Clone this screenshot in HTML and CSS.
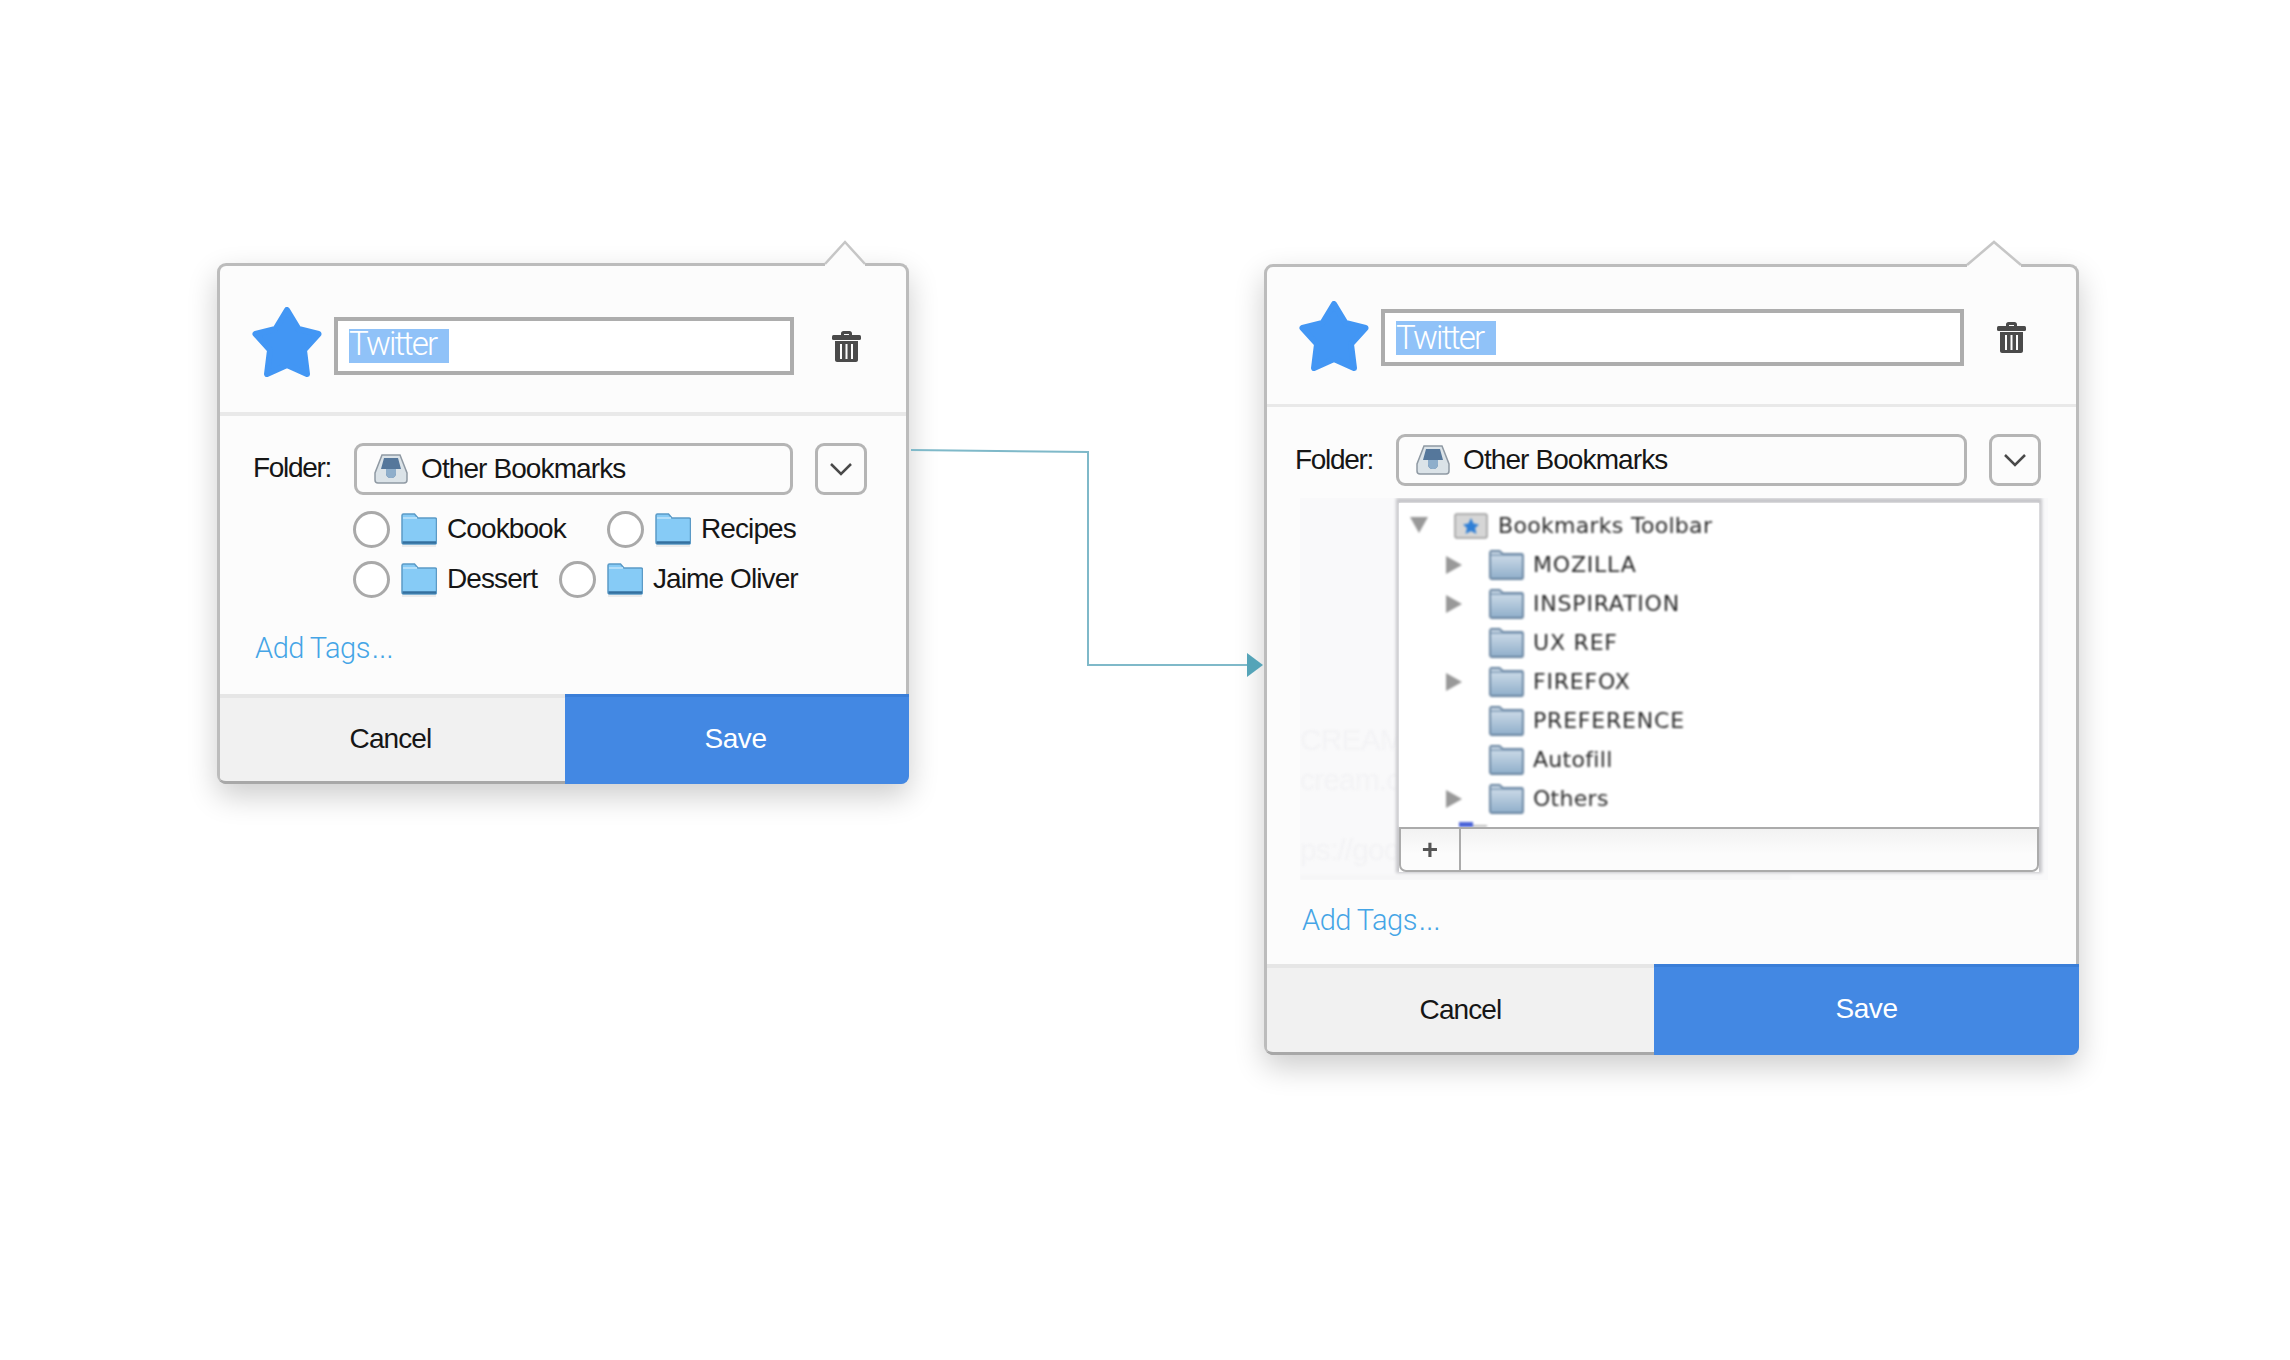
FILE: index.html
```html
<!DOCTYPE html>
<html lang="en">
<head>
    <meta charset="UTF-8">
    <meta name="viewport" content="width=device-width, initial-scale=1.0">
    <title>Bookmark Popup Flow</title>
    <link rel="stylesheet" href="styles.css">
</head>
<body>

<svg class="defs" width="0" height="0">
    <symbol id="star" viewBox="0 0 70 70">
        <polygon points="35,3 46.500,22 66.500,27 52,43 55,67 35,58 15,67 18,43 3.500,27 23.500,22" fill="#4296f4" stroke="#4296f4" stroke-width="6" stroke-linejoin="round"/>
    </symbol>
    <symbol id="trash" viewBox="0 0 29 31">
        <path d="M9 5V2.500C9 1 10 0 11.500 0h6C19 0 20 1 20 2.500V5h-3V3h-5v2z" fill="#4a4a4a"/>
        <rect x="0" y="4" width="29" height="5" rx="1.500" fill="#4a4a4a"/>
        <path d="M3 10h23v19c0 1-1 2-2 2H5c-1 0-2-1-2-2z" fill="#4a4a4a"/>
        <path d="M9 13v15M14.500 13v15M20 13v15" stroke="#fcfcfc" stroke-width="2"/>
    </symbol>
    <symbol id="tray" viewBox="0 0 34 30">
        <path d="M8 1h18l7 18v7c0 2-1 3-3 3H4c-2 0-3-1-3-3v-7z" fill="#dbe3e8" stroke="#8f99a3" stroke-width="1.500"/>
        <path d="M10 4h14l3 11h-5v4c0 3-2 5-5 5s-5-2-5-5v-4H7z" fill="#55779b"/>
        <path d="M12 15h10v4c0 3-2 5-5 5s-5-2-5-5z" fill="#8eaecb"/>
    </symbol>
    <symbol id="folder-blue" viewBox="0 0 36 34">
        <rect x="1" y="31" width="34" height="3" fill="#ececec"/>
        <path d="M1 29V2.500C1 1.500 1.500 1 2.500 1h11L17 5h17c1 0 1.500.5 1.500 1.500V29c0 1-.5 2-1.500 2H2.500C1.500 31 1 30 1 29z" fill="#86cbf6" stroke="#5b9ac6" stroke-width="1.500"/>
        <path d="M2 5h14" stroke="#b3def9" stroke-width="2"/>
        <path d="M1.500 29.500h33.500" stroke="#35709f" stroke-width="2.500"/>
    </symbol>
    <symbol id="folder-gray" viewBox="0 0 35 30">
        <linearGradient id="folderFill" x1="0" y1="0" x2="0" y2="1">
            <stop offset="0" stop-color="#d5e1ec"/>
            <stop offset="1" stop-color="#8faeca"/>
        </linearGradient>
        <path d="M1 27V3c0-1 .5-2 1.500-2h8L14 4h18.500c1 0 1.500 1 1.500 2v21c0 1-.5 2-1.500 2h-30C1.500 29 1 28 1 27z" fill="url(#folderFill)" stroke="#67839f" stroke-width="1.800"/>
        <path d="M2 5h31" stroke="#7c98b4" stroke-width="1.500"/>
    </symbol>
    <symbol id="toolbar" viewBox="0 0 34 26">
        <rect x="1" y="1" width="32" height="24" rx="2" fill="#d6d6d6" stroke="#9a9a9a" stroke-width="1.500"/>
        <polygon points="17,5 19.500,10.500 25,11.500 21,15 22.500,21 17,18 11.500,21 13,15 9,11.500 14.500,10.500" fill="#2f7fd6"/>
    </symbol>
</svg>

<svg class="connector" width="2290" height="1360">
    <path d="M911 450L1088 452V665H1250" fill="none" stroke="#7fb9c9" stroke-width="2"/>
    <polygon points="1247,653 1263,665 1247,677" fill="#55a4b8"/>
</svg>

<div class="page">

    <div class="popup popup-a">
        <svg class="beak" width="44" height="28">
            <polygon points="2,24 22,2 42,24 42,28 2,28" fill="#fcfcfc"/>
            <polyline points="2,24 22,2 42,24" fill="none" stroke="#c6c6c6" stroke-width="2.500"/>
        </svg>
        <div class="head">
            <svg class="star"><use href="#star"/></svg>
            <div class="title-input"><span class="title-sel">Twitter</span></div>
            <svg class="trash"><use href="#trash"/></svg>
        </div>
        <div class="folder-row">
            <span class="folder-label">Folder:</span>
            <div class="folder-select">
                <svg class="tray"><use href="#tray"/></svg>
                <span>Other Bookmarks</span>
            </div>
            <div class="chevron-btn">
                <svg width="24" height="14" viewBox="0 0 24 14"><path d="M2 2l10 10L22 2" fill="none" stroke="#4a4a4a" stroke-width="2.500"/></svg>
            </div>
        </div>
        <div class="options">
            <div class="option-row row-one">
                <div class="option"><span class="radio"></span><svg class="mini-folder"><use href="#folder-blue"/></svg><span>Cookbook</span></div>
                <div class="option"><span class="radio"></span><svg class="mini-folder"><use href="#folder-blue"/></svg><span>Recipes</span></div>
            </div>
            <div class="option-row row-two">
                <div class="option"><span class="radio"></span><svg class="mini-folder"><use href="#folder-blue"/></svg><span>Dessert</span></div>
                <div class="option"><span class="radio"></span><svg class="mini-folder"><use href="#folder-blue"/></svg><span>Jaime Oliver</span></div>
            </div>
        </div>
        <a class="add-tags">Add Tags<span class="dots">…</span></a>
        <div class="actions">
            <div class="btn-cancel">Cancel</div>
            <div class="btn-save">Save</div>
        </div>
    </div>

    <div class="popup popup-b">
        <svg class="beak" width="58" height="29">
            <polygon points="2,25 29,2 56,25 56,29 2,29" fill="#fcfcfc"/>
            <polyline points="2,25 29,2 56,25" fill="none" stroke="#c6c6c6" stroke-width="2.500"/>
        </svg>
        <div class="head">
            <svg class="star"><use href="#star"/></svg>
            <div class="title-input"><span class="title-sel">Twitter</span></div>
            <svg class="trash"><use href="#trash"/></svg>
        </div>
        <div class="folder-row">
            <span class="folder-label">Folder:</span>
            <div class="folder-select">
                <svg class="tray"><use href="#tray"/></svg>
                <span>Other Bookmarks</span>
            </div>
            <div class="chevron-btn">
                <svg width="24" height="14" viewBox="0 0 24 14"><path d="M2 2l10 10L22 2" fill="none" stroke="#4a4a4a" stroke-width="2.500"/></svg>
            </div>
        </div>

        <div class="tree-backdrop">
            <div class="ghost">
                <span class="ghost-a">CREAM</span>
                <span class="ghost-b">cream.co</span>
                <span class="ghost-c">ps://goo</span>
                <div class="ghost-strip"></div>
            </div>
            <div class="tree">
                <div class="tree-list">
                    <div class="tree-row root"><span class="twisty open"></span><svg class="toolbar-icon"><use href="#toolbar"/></svg><span>Bookmarks Toolbar</span></div>
                    <div class="tree-row caps"><span class="twisty shut"></span><svg class="tree-folder"><use href="#folder-gray"/></svg><span>MOZILLA</span></div>
                    <div class="tree-row caps"><span class="twisty shut"></span><svg class="tree-folder"><use href="#folder-gray"/></svg><span>INSPIRATION</span></div>
                    <div class="tree-row caps"><span class="twisty"></span><svg class="tree-folder"><use href="#folder-gray"/></svg><span>UX REF</span></div>
                    <div class="tree-row caps"><span class="twisty shut"></span><svg class="tree-folder"><use href="#folder-gray"/></svg><span>FIREFOX</span></div>
                    <div class="tree-row caps"><span class="twisty"></span><svg class="tree-folder"><use href="#folder-gray"/></svg><span>PREFERENCE</span></div>
                    <div class="tree-row"><span class="twisty"></span><svg class="tree-folder"><use href="#folder-gray"/></svg><span>Autofill</span></div>
                    <div class="tree-row"><span class="twisty shut"></span><svg class="tree-folder"><use href="#folder-gray"/></svg><span>Others</span></div>
                    <div class="cut-off"><i></i><b></b></div>
                </div>
                <div class="tree-bar">
                    <div class="tree-add">+</div>
                </div>
            </div>
        </div>

        <a class="add-tags">Add Tags<span class="dots">…</span></a>
        <div class="actions">
            <div class="btn-cancel">Cancel</div>
            <div class="btn-save">Save</div>
        </div>
    </div>

</div>

</body>
</html>
```

FILE: styles.css
```css
* { margin: 0; padding: 0; box-sizing: border-box; }

body { background-color: #fff; font-family: "Liberation Sans", Arial, sans-serif; color: #161616; font-size: 28px; letter-spacing: -0.9px; overflow: hidden; }

.defs { position: absolute; }

/* line between the two popups, on top of everything */
.connector { position: absolute; top: 0; left: 0; z-index: 5; }

.page { width: 2290px; height: 1360px; display: flex; align-items: flex-start; padding: 263px 0 0 217px; gap: 355px; }

.popup { position: relative; background-color: #fcfcfc; border: 3px solid #bcbcbc; border-bottom-color: #a8a8a8; border-radius: 9px; box-shadow: 0 12px 30px rgba(0, 0, 0, 0.2); }
.popup-a { width: 692px; }
.popup-b { width: 815px; margin-top: 1px; }

.beak { position: absolute; display: block; }
.popup-a .beak { top: -26px; left: 603px; }
.popup-b .beak { top: -27px; left: 698px; }

/* top row */
.head { display: flex; align-items: flex-start; border-bottom: 4px solid #e9e9e9; padding-left: 32px; }
.popup-a .head { height: 150px; padding-top: 41px; }
.popup-b .head { height: 140px; padding-top: 34px; border-bottom-width: 3px; }

.star { width: 70px; height: 70px; flex: none; }
.trash { width: 29px; height: 31px; flex: none; }
.popup-a .trash { margin: 24px 0 0 38px; }
.popup-b .trash { margin: 21px 0 0 33px; }

.title-input { background-color: #fff; border: 4px solid #adadad; margin-left: 12px; display: flex; align-items: center; flex: none; }
.popup-a .title-input { width: 460px; height: 58px; margin-top: 10px; padding-left: 11px; }
.popup-b .title-input { width: 583px; height: 57px; margin-top: 8px; padding-left: 11px; }

.title-sel { display: block; width: 100px; height: 34px; background-color: #90c2f8; color: #fff; font-family: Roboto, "Liberation Sans", sans-serif; font-weight: 300; font-size: 33px; letter-spacing: -1.9px; }
.popup-a .title-sel { line-height: 30px; }
.popup-b .title-sel { line-height: 33px; }

/* folder row */
.folder-row { display: flex; align-items: center; padding-top: 27px; gap: 22px; }
.popup-a .folder-row { padding-left: 33px; }
.popup-b .folder-row { padding-left: 28px; }

.folder-label { width: 79px; flex: none; letter-spacing: -1.3px; }
.popup-a .folder-label { line-height: 30px; padding-bottom: 2px; }

.folder-select { height: 52px; border: 3px solid #b5b5b5; border-radius: 9px; display: flex; align-items: center; padding-left: 17px; gap: 13px; flex: none; }
.popup-a .folder-select { width: 439px; }
.popup-b .folder-select { width: 571px; }

.tray { width: 34px; height: 30px; }

.chevron-btn { width: 52px; height: 52px; border: 3px solid #b5b5b5; border-radius: 9px; display: flex; align-items: center; justify-content: center; flex: none; }

/* radio choices */
.options { margin: 16px 0 0 133px; display: flex; flex-direction: column; gap: 14px; }
.option-row { display: flex; }
.option { display: flex; align-items: center; gap: 11px; height: 36px; }
.row-one .option:first-child { width: 254px; }
.row-two .option:first-child { width: 206px; }

.radio { width: 37px; height: 37px; border: 3px solid #a9a9a9; border-radius: 50%; background-color: #fff; flex: none; }
.mini-folder { width: 36px; height: 34px; flex: none; margin: 2px -1px 0 0; }

.add-tags { display: block; color: #45a5e6; font-family: Roboto, "Liberation Sans", sans-serif; font-weight: 300; font-size: 29px; line-height: 32px; letter-spacing: -0.5px; padding-left: 35px; }
.dots { font-family: "Liberation Sans", sans-serif; font-size: 23px; line-height: 0; margin-left: 1px; }
.popup-a .add-tags { margin-top: 35px; padding-bottom: 30px; }
.popup-b .add-tags { margin-top: 24px; padding-bottom: 28px; }

/* footer buttons */
.actions { display: flex; height: 90px; margin: 0 -3px -3px 0; }
.popup-b .actions { height: 91px; }
.btn-cancel { background-color: #f1f1f1; border-top: 4px solid #e6e6e6; border-bottom: 3px solid #a8a8a8; display: flex; align-items: center; justify-content: center; border-radius: 0 0 0 6px; flex: none; padding-bottom: 1px; }
.popup-a .btn-cancel { width: 345px; padding-right: 4px; }
.popup-b .btn-cancel { width: 387px; }
.btn-save { flex: 1; background-color: #4388e3; border-top: 3px solid #3a7ed8; color: #fff; display: flex; align-items: center; justify-content: center; border-radius: 0 0 8px 0; letter-spacing: -0.4px; padding-bottom: 4px; }
.popup-a .btn-save { padding-right: 3px; }

/* expanded folder tree, popup on the right only */
.tree-backdrop { position: relative; overflow: hidden; background-color: #f9f9fa; width: 748px; height: 382px; margin: 12px 0 0 33px; padding: 5px 9px 8px 99px; }

.ghost span { position: absolute; left: 0; color: #f3f3f5; white-space: nowrap; font-size: 30px; line-height: 34px; filter: blur(0.8px); }
.ghost-a { top: 225px; }
.ghost-b { top: 265px; }
.ghost-c { top: 335px; }
.ghost-strip { position: absolute; left: 0; bottom: 0; width: 490px; height: 5px; background-color: #f6f6f7; filter: blur(1px); }

.tree { position: relative; box-shadow: 0 -2px 3px 3px #c6c6ca; background-color: #fff; font-family: "DejaVu Sans", sans-serif; font-size: 22px; letter-spacing: 0.3px; color: #2a2a2a; }
.tree-list { padding: 3px 0 9px; height: 324px; position: relative; background-color: #fff; filter: blur(0.8px); }
.tree-row { display: flex; align-items: center; height: 39px; padding-left: 47px; }
.tree-row.root { padding-left: 11px; }
.tree-row.caps { letter-spacing: 0.8px; }
.twisty { width: 43px; height: 18px; flex: none; position: relative; }
.root .twisty { width: 44px; }
.twisty.shut::before { content: ""; position: absolute; left: 0; top: 0; border-left: 16px solid #999; border-top: 9px solid transparent; border-bottom: 9px solid transparent; }
.twisty.open::before { content: ""; position: absolute; left: 0; top: 0; border-top: 16px solid #999; border-left: 9.5px solid transparent; border-right: 9.5px solid transparent; }
.toolbar-icon { width: 34px; height: 26px; margin-right: 10px; flex: none; }
.tree-folder { width: 35px; height: 30px; margin-right: 9px; flex: none; }

.cut-off { position: absolute; left: 60px; bottom: 0; display: flex; align-items: flex-end; }
.cut-off i { display: block; width: 14px; height: 5px; background-color: #4a63d8; }
.cut-off b { display: block; width: 14px; height: 2px; background-color: #bbb; }

.tree-bar { height: 45px; border: 2px solid #ababab; border-radius: 0 0 7px 7px; background: linear-gradient(#f2f2f2, #fcfcfc 60%); display: flex; filter: blur(0.3px); }
.tree-add { width: 60px; border-right: 2px solid #ababab; display: flex; align-items: center; justify-content: center; font-family: "Liberation Sans", sans-serif; font-weight: bold; font-size: 28px; color: #555; }
```
